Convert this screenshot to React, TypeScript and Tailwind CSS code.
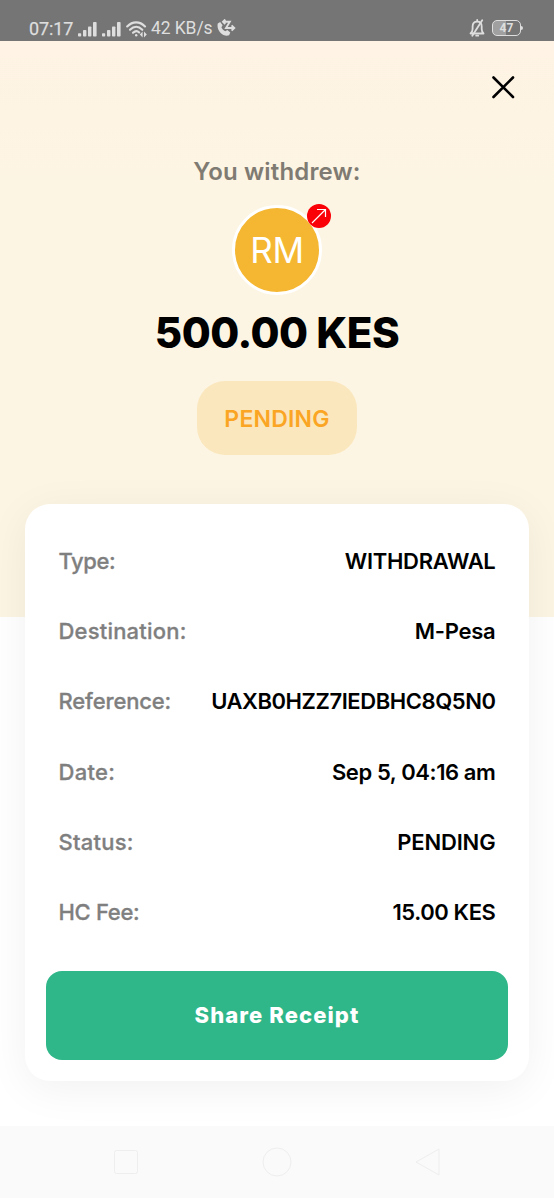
import type { ReactNode } from "react";

type Detail = {
  label: string;
  value: string;
  labelClass: string;
  valueClass: string;
};

const DETAILS: Detail[] = [
  { label: "Type:", value: "WITHDRAWAL", labelClass: "tracking-[-0.4px]", valueClass: "tracking-[-0.3px]" },
  { label: "Destination:", value: "M-Pesa", labelClass: "tracking-[0.2px]", valueClass: "tracking-[-0.25px]" },
  { label: "Reference:", value: "UAXB0HZZ7IEDBHC8Q5N0", labelClass: "tracking-[-0.15px]", valueClass: "tracking-[-0.43px]" },
  { label: "Date:", value: "Sep 5, 04:16 am", labelClass: "tracking-[0.3px]", valueClass: "tracking-[-0.4px]" },
  { label: "Status:", value: "PENDING", labelClass: "tracking-[0.25px]", valueClass: "tracking-[-0.15px]" },
  { label: "HC Fee:", value: "15.00 KES", labelClass: "tracking-[-0.3px]", valueClass: "tracking-[-0.4px]" },
];

const SignalIcon = () => (
  <svg width="19" height="15" viewBox="0 0 19 15" fill="currentColor">
    <rect x="0" y="11.2" width="3.2" height="3.3" rx="0.8" />
    <rect x="5" y="8" width="3.4" height="6.5" rx="0.8" />
    <rect x="10" y="4.5" width="3.4" height="10" rx="0.8" />
    <rect x="15" y="0" width="3.6" height="14.5" rx="0.8" />
  </svg>
);

const WifiIcon = () => (
  <svg width="22" height="17" viewBox="0 0 22 17" fill="none" stroke="currentColor" strokeWidth="2.1" strokeLinecap="round">
    <path d="M1.2 5.5C6.5 0 13.8 0 19 5.5" />
    <path d="M4 8.8c4-4 8.4-4 12.3 0" />
    <path d="M7 11.8c2.2-2.2 4.4-2.2 6.2-.4" />
    <circle cx="10.2" cy="14.2" r="1.2" fill="currentColor" stroke="none" />
    <path d="M16.6 10.5v6l-2.8-3zM18 10.5v6l2.8-3z" fill="currentColor" stroke="none" />
  </svg>
);

const CallIcon = () => (
  <svg width="19" height="18" viewBox="0 0 19 18" fill="none" stroke="currentColor" strokeWidth="1.9">
    <path
      d="M.8 4.5 3.2 3l2.4 3.3-1.2 2c.8 2 2.100 3.200 3.900 4l2-1.200 3 2.400-1.200 2.700C6.500 18.500-1 11.500.8 4.500z"
      fill="currentColor"
      stroke="none"
    />
    <path d="M6 2.800h6.800L9 9h8M8.300.5 6 2.800l2.300 2.200M14.600 6.300 17.300 9l-2.700 2.700" />
  </svg>
);

const MutedBellIcon = () => (
  <svg width="17" height="18" viewBox="0 0 17 18" fill="none" stroke="currentColor" strokeWidth="1.8" strokeLinecap="round" strokeLinejoin="round">
    <path d="M1.5 14.5h13c-1.3-1.3-1.8-2.3-1.8-4.5V7.5C12.7 4.5 11 2.7 8.2 2.7S3.6 4.500 3.6 7.500V10C3.600 12.200 3 13.200 1.500 14.500z" />
    <path d="M8.2 1v1M7.2 16.7h2M13.2 1.2 3.3 16.7" />
  </svg>
);

const StatusBar = () => (
  <header className="flex h-[41px] shrink-0 items-end bg-[#757575] pb-[4px] pl-[29px] pr-[31px] font-[Roboto] text-[#dedede]">
    <span className="w-[44px] text-[18px] leading-[17px] tracking-[-0.1px] [-webkit-text-stroke:0.25px_currentColor]">07:17</span>
    <div className="ml-[5px] flex h-[18px] items-center gap-[5px] pt-[2px]">
      <SignalIcon />
      <SignalIcon />
      <WifiIcon />
    </div>
    <span className="ml-[3px] text-[17.5px] leading-[17px] tracking-[-0.1px]">42 KB/s</span>
    <div className="ml-[5px]">
      <CallIcon />
    </div>
    <div className="ml-auto flex h-[18px] items-center gap-[6px]">
      <MutedBellIcon />
      <div className="flex items-center">
        <span className="flex h-[16px] w-[29px] items-center justify-center rounded-[5px] border border-[#dedede] bg-linear-to-r from-[#a0a0a0] from-47% to-[#757575] to-47% text-[12px] font-bold leading-none">
          47
        </span>
        <span className="h-[4px] w-[2px] rounded-r bg-[#dedede]" />
      </div>
    </div>
  </header>
);

const Avatar = ({ children }: { children: ReactNode }) => (
  <div className="relative flex size-[90px] items-center justify-center rounded-full border-[3.5px] border-white bg-[#f5b731] text-[35px] tracking-[-0.4px] text-white">
    <span>{children}</span>
    <span className="absolute -right-[12px] -top-[4px] flex size-[24px] items-center justify-center rounded-full bg-[#fa0007]">
      <svg width="16" height="16" viewBox="0 0 16 16" fill="none" stroke="white" strokeWidth="1.2">
        <path d="M1 15 14.500 1.500M6 1.500h8.500V9" />
      </svg>
    </span>
  </div>
);

const DetailRow = ({ label, value, labelClass, valueClass }: Detail) => (
  <div className="flex h-[70.2px] items-center justify-between whitespace-nowrap text-[22px]">
    <dt className={`font-medium text-[#7f7f7f] [-webkit-text-stroke:0.3px_currentColor] ${labelClass}`}>{label}</dt>
    <dd className={`font-semibold text-black ${valueClass}`}>{value}</dd>
  </div>
);

const NavigationBar = () => (
  <nav className="flex h-[74px] shrink-0 items-center justify-center gap-[123px] border-b-2 border-white bg-[#fafafa] text-[#eeeeee]">
    <svg width="26" height="26" viewBox="0 0 26 26" fill="none" stroke="currentColor">
      <rect x="1.5" y="1.5" width="23" height="23" rx="2" />
    </svg>
    <svg width="30" height="30" viewBox="0 0 30 30" fill="none" stroke="currentColor">
      <circle cx="15" cy="15" r="14" />
    </svg>
    <svg width="26" height="30" viewBox="0 0 26 30" fill="none" stroke="currentColor">
      <path d="M24 2v26L1 15z" strokeLinejoin="round" />
    </svg>
  </nav>
);

export default function App() {
  return (
    <div className="flex h-[1200px] w-[554px] flex-col overflow-hidden bg-white font-[Inter]">
      <StatusBar />
      <main className="flex flex-1 flex-col bg-linear-to-b from-[#fef3e4] to-[#fdf5e3] to-[150px] bg-[length:100%_576px] bg-no-repeat">
        <div className="flex h-[92px] justify-end pr-[38px] pt-[33px]">
          <button aria-label="Close" className="size-[26px]">
            <svg width="26" height="26" viewBox="0 0 26 26" fill="none" stroke="black" strokeWidth="2.6" strokeLinecap="round">
              <path d="M3.5 3.5 23 23M23 3.5 3.5 23" />
            </svg>
          </button>
        </div>
        <section className="flex flex-col items-center">
          <h1 className="mt-[22px] text-[24px] font-semibold leading-[34px] tracking-[0.15px] text-[#7f7b72]">You withdrew:</h1>
          <div className="mt-[16px]">
            <Avatar>RM</Avatar>
          </div>
          <p className="mt-[14px] text-[42px] font-extrabold leading-[48px] tracking-[-0.5px]">500.00 KES</p>
          <span className="mt-[24px] flex h-[74px] w-[160px] items-center justify-center rounded-[28px] bg-[#fae7bd] pt-[2px] text-[23px] font-semibold tracking-[0.2px] text-[#fba524]">
            PENDING
          </span>
        </section>
        <section className="mx-[25px] mt-[49px] h-[577px] rounded-[25px] bg-white px-[21px] pt-[22.4px] shadow-[0_8px_44px_rgba(0,0,0,0.06)]">
          <dl className="px-[12.5px]">
            {DETAILS.map((detail) => (
              <DetailRow key={detail.label} {...detail} />
            ))}
          </dl>
          <button className="mt-[23.4px] flex h-[89px] w-full items-center justify-center rounded-[16px] bg-[#2fb78a] text-[22px] font-extrabold tracking-[1.1px] text-white">
            Share Receipt
          </button>
        </section>
      </main>
      <NavigationBar />
    </div>
  );
}
